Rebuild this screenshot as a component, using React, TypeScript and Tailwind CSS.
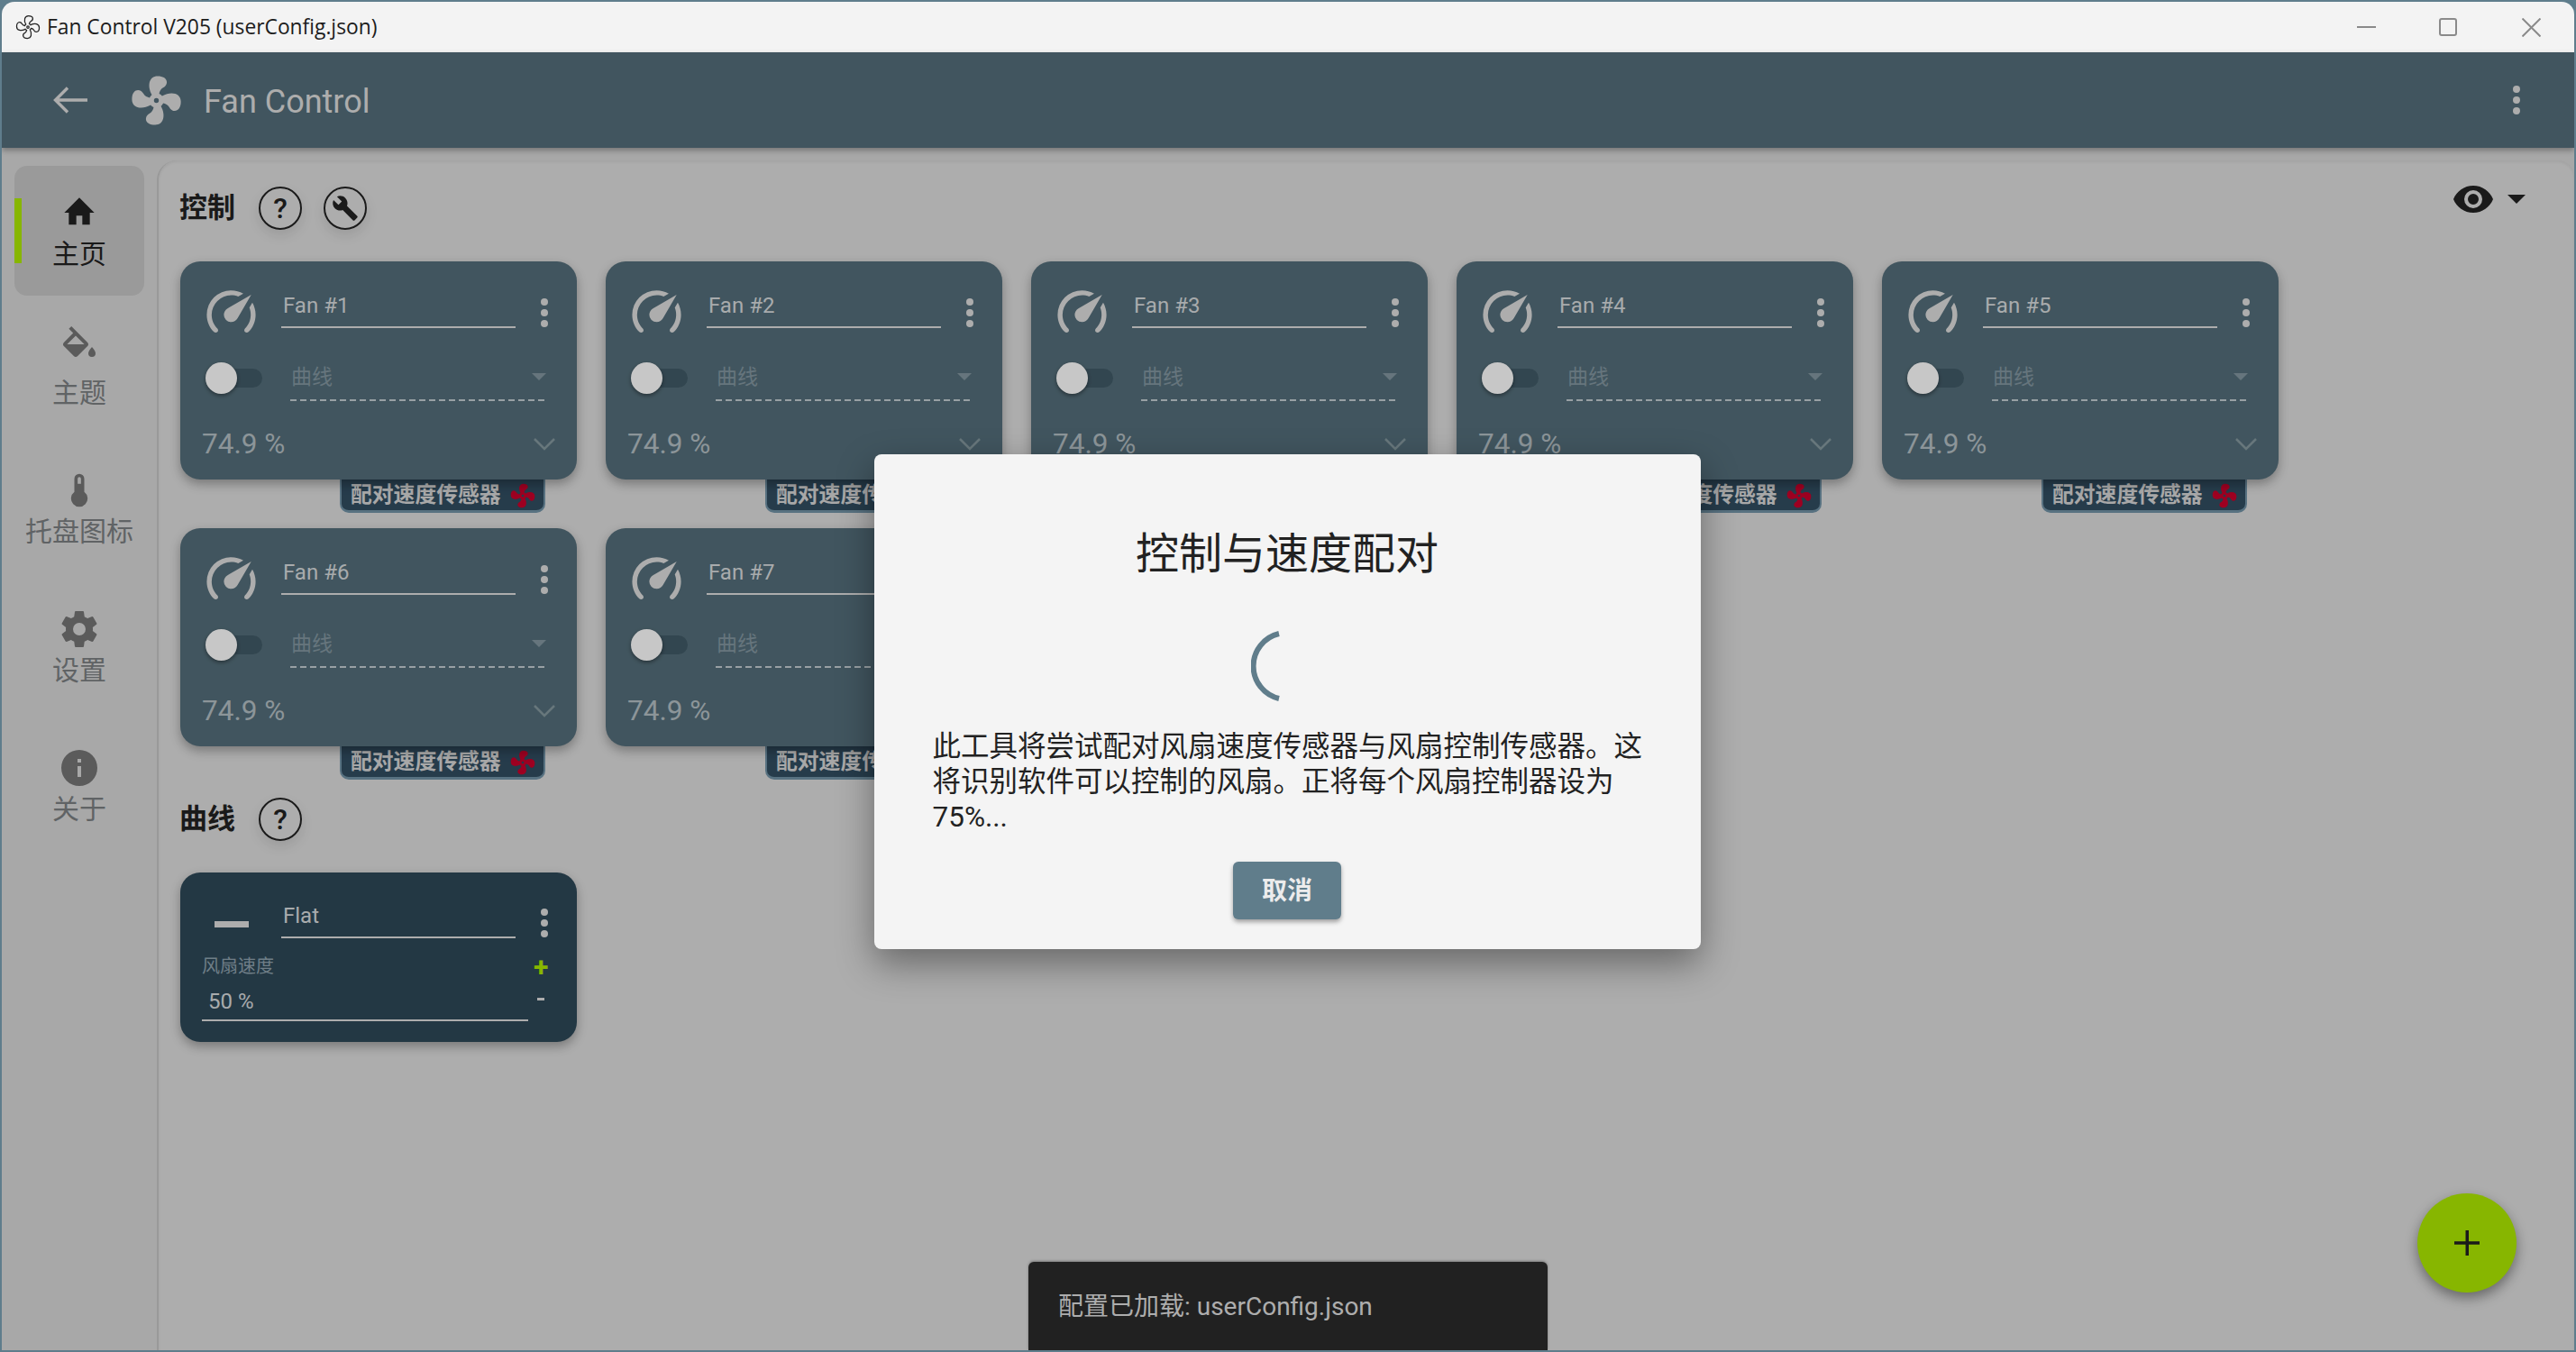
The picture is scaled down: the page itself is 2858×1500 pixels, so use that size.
import React from 'react';

const FAN = "M12,11A1,1 0 0,0 11,12A1,1 0 0,0 12,13A1,1 0 0,0 13,12A1,1 0 0,0 12,11M12.5,2C17,2 17.11,5.57 14.75,6.75C13.76,7.24 13.32,8.29 13.13,9.22C13.61,9.42 14.03,9.73 14.35,10.13C18.05,8.13 22.03,8.92 22.03,12.5C22.03,17 18.46,17.1 17.28,14.73C16.78,13.74 15.72,13.3 14.79,13.11C14.59,13.59 14.28,14 13.88,14.34C15.87,18.03 15.08,22 11.5,22C7,22 6.91,18.42 9.27,17.24C10.25,16.75 10.69,15.71 10.89,14.79C10.4,14.59 9.97,14.27 9.65,13.87C5.96,15.85 2,15.07 2,11.5C2,7 5.56,6.89 6.74,9.26C7.24,10.25 8.29,10.68 9.22,10.87C9.41,10.39 9.73,9.97 10.14,9.65C8.15,5.96 8.94,2 12.5,2Z";
const GAUGE = "M12,16A3,3 0 0,1 9,13C9,11.88 9.61,10.9 10.5,10.39L20.21,4.77L14.68,14.35C14.18,15.33 13.17,16 12,16M12,3C13.81,3 15.5,3.5 16.97,4.32L14.87,5.53C14,5.19 13,5 12,5A8,8 0 0,0 4,13C4,15.21 4.89,17.21 6.34,18.65H6.35C6.74,19.04 6.74,19.67 6.35,20.06C5.96,20.45 5.32,20.45 4.93,20.07V20.07C3.12,18.26 2,15.76 2,13A10,10 0 0,1 12,3M22,13C22,15.76 20.88,18.26 19.07,20.07V20.07C18.68,20.45 18.05,20.45 17.66,20.06C17.27,19.67 17.27,19.04 17.66,18.65V18.65C19.11,17.2 20,15.21 20,13C20,12 19.81,11 19.46,10.1L20.67,8C21.5,9.5 22,11.14 22,13Z";
const HOME = "M10,20V14H14V20H19V12H22L12,2L2,12H5V20H10Z";
const BUCKET = "M19,11.5C19,11.5 17,13.67 17,15A2,2 0 0,0 19,17A2,2 0 0,0 21,15C21,13.67 19,11.5 19,11.5M5.21,10L10,5.21L14.79,10M16.56,8.94L7.62,0L6.21,1.41L8.59,3.79L3.44,8.94C2.85,9.5 2.85,10.47 3.44,11.06L8.94,16.56C9.23,16.85 9.62,17 10,17C10.38,17 10.77,16.85 11.06,16.56L16.56,11.06C17.15,10.47 17.15,9.5 16.56,8.94Z";
const THERMO = "M15 13V5A3 3 0 0 0 9 5V13A5 5 0 1 0 15 13M12 4A1 1 0 0 1 13 5V8H11V5A1 1 0 0 1 12 4Z";
const COG = "M12,15.5A3.5,3.5 0 0,1 8.5,12A3.5,3.5 0 0,1 12,8.5A3.5,3.5 0 0,1 15.5,12A3.5,3.5 0 0,1 12,15.5M19.43,12.97C19.47,12.65 19.5,12.33 19.5,12C19.5,11.67 19.47,11.34 19.43,11L21.54,9.37C21.73,9.22 21.78,8.95 21.66,8.73L19.66,5.27C19.54,5.05 19.27,4.96 19.05,5.05L16.56,6.05C16.04,5.66 15.5,5.32 14.87,5.07L14.5,2.42C14.46,2.18 14.25,2 14,2H10C9.75,2 9.54,2.18 9.5,2.42L9.13,5.07C8.5,5.32 7.96,5.66 7.44,6.05L4.95,5.05C4.73,4.96 4.46,5.05 4.34,5.27L2.34,8.73C2.21,8.95 2.27,9.22 2.46,9.37L4.57,11C4.53,11.34 4.5,11.67 4.5,12C4.5,12.33 4.53,12.65 4.57,12.97L2.46,14.63C2.27,14.78 2.21,15.05 2.34,15.27L4.34,18.73C4.46,18.95 4.73,19.03 4.95,18.95L7.44,17.94C7.96,18.34 8.5,18.68 9.13,18.93L9.5,21.58C9.54,21.82 9.75,22 10,22H14C14.25,22 14.46,21.82 14.5,21.58L14.87,18.93C15.5,18.67 16.04,18.34 16.56,17.94L19.05,18.95C19.27,19.03 19.54,18.95 19.66,18.73L21.66,15.27C21.78,15.05 21.73,14.78 21.54,14.63L19.43,12.97Z";
const INFO = "M13,9H11V7H13M13,17H11V11H13M12,2A10,10 0 0,0 2,12A10,10 0 0,0 12,22A10,10 0 0,0 22,12A10,10 0 0,0 12,2Z";
const WRENCH = "M22.7,19L13.6,9.9C14.5,7.6 14,4.9 12.1,3C10.1,1 7.1,0.6 4.7,1.7L9,6L6,9L1.6,4.7C0.4,7.1 0.9,10.1 2.9,12.1C4.8,14 7.5,14.5 9.8,13.6L18.9,22.7C19.3,23.1 19.9,23.1 20.3,22.7L22.6,20.4C23.1,20 23.1,19.3 22.7,19Z";
const EYE = "M12,9A3,3 0 0,0 9,12A3,3 0 0,0 12,15A3,3 0 0,0 15,12A3,3 0 0,0 12,9M12,17A5,5 0 0,1 7,12A5,5 0 0,1 12,7A5,5 0 0,1 17,12A5,5 0 0,1 12,17M12,4.5C7,4.5 2.73,7.61 1,12C2.73,16.39 7,19.5 12,19.5C17,19.5 21.27,16.39 23,12C21.27,7.61 17,4.5 12,4.5Z";

const Mdi = ({ d, className }: { d: string; className: string }) => (
  <svg viewBox="0 0 24 24" fill="currentColor" className={className}>
    <path d={d} />
  </svg>
);

const Dots = ({ className = '' }: { className?: string }) => (
  <div className={`flex flex-col gap-[4px] ${className}`}>
    <div className="h-[8px] w-[8px] rounded-full bg-[#dedede]" />
    <div className="h-[8px] w-[8px] rounded-full bg-[#dedede]" />
    <div className="h-[8px] w-[8px] rounded-full bg-[#dedede]" />
  </div>
);

const NameField = ({ name }: { name: string }) => (
  <div className="ml-[23px] h-[50px] w-[260px] self-start border-b-2 border-[#dedede] pl-[2px] pt-[1px] text-[24px] leading-[48px] text-[#d8dcde]">
    {name}
  </div>
);

const NavItem = ({ icon, label, iconClass }: { icon: string; label: string; iconClass: string }) => (
  <div className="flex h-[154px] flex-col items-center pt-[39px] text-[#7b7f82]">
    <div className="flex h-[46px] items-center justify-center text-[#757575]">
      <Mdi d={icon} className={iconClass} />
    </div>
    <div className="mt-[5px] text-[30px] leading-[36px]">{label}</div>
  </div>
);

const HelpButton = ({ children }: { children: React.ReactNode }) => (
  <div className="flex h-[48px] w-[48px] items-center justify-center rounded-full border-[2.5px] border-[#222] text-[32px] font-medium text-[#222] shadow-[0_6px_14px_rgba(0,0,0,0.1)]">
    {children}
  </div>
);

const FanCard = ({ index }: { index: number }) => (
  <div>
    <div className="relative z-10 h-[242px] w-[440px] rounded-[22px] bg-[#546e7a] shadow-[0_5px_12px_rgba(0,0,0,0.3)]">
      <div className="flex items-center pl-[24px] pt-[24px] text-[#dedede]">
        <Mdi d={GAUGE} className="h-[65px] w-[65px]" />
        <NameField name={`Fan #${index}`} />
        <Dots className="ml-[28px]" />
      </div>
      <div className="mt-[15px] flex h-[51px] items-center pl-[28px]">
        <div className="relative h-[35px] w-[62px]">
          <div className="absolute left-[17px] top-[7px] h-[21px] w-[46px] rounded-full bg-[#415a67]" />
          <div className="absolute left-0 top-0 h-[35px] w-[35px] rounded-full bg-white shadow-[0_2px_4px_rgba(0,0,0,0.4)]" />
        </div>
        <div className="ml-[32px] w-[282px]">
          <div className="flex h-[49px] items-center justify-between pl-[1px] pt-[1px] text-[23px] text-[#8397a1]">
            <span>曲线</span>
            <div className="-mt-[3px] mr-[-2px] h-0 w-0 border-x-[8px] border-t-[8px] border-x-transparent border-t-[#8397a1]" />
          </div>
          <div className="h-[2px] bg-[repeating-linear-gradient(90deg,#c3ced3_0_7px,transparent_7px_11px)]" />
        </div>
      </div>
      <div className="mt-[24px] flex h-[48px] items-center justify-between px-[24px]">
        <span className="text-[31.5px] text-[#b4bfc4]">74.9 %</span>
        <svg viewBox="0 0 24 14" className="h-[14px] w-[24px] text-[#85999f]" fill="none" stroke="currentColor" strokeWidth="2.5">
          <path d="M1 1L12 12L23 1" />
        </svg>
      </div>
    </div>
    <div className="ml-[177px] flex h-[37px] w-[228px] items-center rounded-b-[10px] border-x-2 border-b-[3px] border-[#7192a6] bg-[#314d61] pl-[10px] pt-[2px] text-[23.8px] font-bold text-[#d8d8d8]">
      <span className="whitespace-nowrap leading-none">配对速度传感器</span>
      <Mdi d={FAN} className="ml-[8px] h-[32px] w-[32px] text-[#c9002b]" />
    </div>
  </div>
);

export default function App() {
  return (
    <div className="h-[1500px] w-[2858px] overflow-hidden bg-[#5f7d8c] p-[2px] font-['Roboto','Noto_Sans_CJK_SC',sans-serif]">
      <div className="relative flex h-full flex-col overflow-hidden rounded-t-[14px]">
        {/* title bar */}
        <div className="flex h-[56px] shrink-0 items-center bg-[#f3f3f3] pl-[14px]">
          <svg viewBox="0 0 24 24" className="h-[30px] w-[30px] text-[#222]" fill="none" stroke="currentColor" strokeWidth="1">
            <path d={FAN} />
          </svg>
          <span className="ml-[6px] font-['Open_Sans',sans-serif] text-[22.8px] text-[#1c1c1c]">Fan Control V205 (userConfig.json)</span>
          <div className="ml-auto flex items-center text-[#8a8a8a]">
            <div className="h-[2px] w-[21px] bg-[#8a8a8a]" />
            <div className="ml-[70px] h-[20px] w-[20px] rounded-[3px] border-2 border-[#8a8a8a]" />
            <svg viewBox="0 0 21 21" className="ml-[72px] mr-[37px] h-[21px] w-[21px]" stroke="currentColor" strokeWidth="2">
              <path d="M0.5 0.5L20.5 20.5M20.5 0.5L0.5 20.5" />
            </svg>
          </div>
        </div>

        <div className="relative flex min-h-0 flex-1 flex-col bg-[#d8d8d8]">
          {/* app bar */}
          <div className="relative z-20 flex h-[106px] shrink-0 items-center bg-[#546e7a] pl-[57px] text-[#dedede] shadow-[0_3px_6px_rgba(0,0,0,0.3)]">
            <svg viewBox="0 0 38 30" className="h-[30px] w-[38px]" fill="none" stroke="currentColor" strokeWidth="3.4">
              <path d="M16 1.5L2.5 15L16 28.5M3 15H38" />
            </svg>
            <Mdi d={FAN} className="ml-[44px] h-[65px] w-[65px]" />
            <span className="ml-[20px] pt-[3px] text-[36px] leading-none">Fan Control</span>
            <Dots className="ml-auto mr-[60px]" />
          </div>

          <div className="flex min-h-0 flex-1">
            {/* side nav */}
            <div className="w-[172px] shrink-0 pt-[20px]">
              <div className="relative ml-[14px] flex h-[144px] w-[144px] flex-col items-center rounded-[14px] bg-[#c6c6c6] pt-[32px] text-[#222]">
                <div className="absolute left-0 top-[36px] h-[72px] w-[8px] bg-[#aeea00]" />
                <Mdi d={HOME} className="h-[40px] w-[46px]" />
                <div className="mt-[8px] text-[30px] leading-[36px]">主页</div>
              </div>
              <NavItem icon={BUCKET} label="主题" iconClass="-mt-[8px] h-[48px] w-[48px]" />
              <NavItem icon={THERMO} label="托盘图标" iconClass="h-[44px] w-[44px]" />
              <NavItem icon={COG} label="设置" iconClass="h-[48px] w-[48px]" />
              <NavItem icon={INFO} label="关于" iconClass="h-[48px] w-[48px]" />
            </div>

            {/* main panel */}
            <div className="mt-[14px] flex-1 rounded-tl-[22px] rounded-tr-[18px] border-l-2 border-[#c4c4c4] bg-[#dedede] pl-[24px] pt-[29px] shadow-[inset_0_2px_3px_rgba(0,0,0,0.06)]">
              <div className="flex items-start justify-between pr-[54px]">
                <div className="-ml-[1px] flex items-center">
                  <span className="w-[88px] text-[31px] font-bold text-[#222]">控制</span>
                  <HelpButton>?</HelpButton>
                  <div className="ml-[24px]">
                    <HelpButton>
                      <Mdi d={WRENCH} className="h-[30px] w-[30px]" />
                    </HelpButton>
                  </div>
                </div>
                <div className="-mt-[6px] flex items-center text-[#222]">
                  <Mdi d={EYE} className="-mt-[4px] h-[48px] w-[48px]" />
                  <div className="-mt-[4px] ml-[14px] h-0 w-0 border-x-[10px] border-t-[10px] border-x-transparent border-t-[#222]" />
                </div>
              </div>

              <div className="mt-[35px] grid grid-cols-[repeat(5,440px)] gap-x-[32px] gap-y-[17px]">
                {[1, 2, 3, 4, 5, 6, 7].map((i) => (
                  <FanCard key={i} index={i} />
                ))}
              </div>

              <div className="-ml-[1px] mt-[20px] flex items-center">
                <span className="w-[88px] text-[31px] font-bold text-[#222]">曲线</span>
                <HelpButton>?</HelpButton>
              </div>

              <div className="mt-[35px] h-[188px] w-[440px] rounded-[22px] bg-[#2e4858] shadow-[0_5px_12px_rgba(0,0,0,0.3)]">
                <div className="flex items-center pl-[24px] pt-[23px] text-[#dedede]">
                  <div className="flex h-[65px] w-[65px] items-center justify-center">
                    <div className="mt-[3px] h-[7px] w-[38px] bg-[#dedede]" />
                  </div>
                  <NameField name="Flat" />
                  <Dots className="ml-[28px]" />
                </div>
                <div className="mt-[2px] flex pl-[24px]">
                  <div className="w-[362px]">
                    <div className="h-[28px] text-[20px] leading-[28px] text-[#8fa2ae]">风扇速度</div>
                    <div className="h-[47px] border-b-2 border-[#dedede] pl-[7px] pt-[9px] text-[24px] leading-[32px] text-[#d8dcde]">50 %</div>
                  </div>
                  <div className="ml-[6px] flex flex-col items-center pt-[1px]">
                    <span className="text-[30px] font-bold leading-[28px] text-[#aeea00]">+</span>
                    <div className="mt-[20px] h-[3px] w-[8px] bg-[#dedede]" />
                  </div>
                </div>
              </div>
            </div>
          </div>

          {/* snackbar */}
          <div className="absolute bottom-0 left-[1139px] z-20 flex h-[98px] w-[576px] items-center rounded-t-[6px] bg-[#2b2b2b] pl-[33px] pt-[2px] text-[28px] text-[#dedede] shadow-[0_-1px_3px_rgba(0,0,0,0.3)]">
            配置已加载: userConfig.json
          </div>

          {/* fab */}
          <div className="absolute bottom-[64px] right-[64px] z-20 flex h-[110px] w-[110px] items-center justify-center rounded-full bg-[#aeea00] text-[#222] shadow-[0_6px_14px_rgba(0,0,0,0.4)]">
            <svg viewBox="0 0 28 28" className="h-[28px] w-[28px]" fill="currentColor">
              <path d="M12.5 0h3.5v12.2H28v3.6H16V28h-3.5V15.8H0v-3.6h12.5z" />
            </svg>
          </div>

          {/* scrim + dialog */}
          <div className="absolute inset-0 z-30 flex items-center justify-center bg-black/22">
            <div className="mr-[2px] w-[917px] rounded-[8px] bg-[#f4f4f4] px-[65px] pb-[33px] pt-[81px] shadow-[0_16px_40px_rgba(0,0,0,0.4)]">
              <div className="text-center text-[48px] leading-[60px] text-[#222]">控制与速度配对</div>
              <svg viewBox="0 0 80 80" className="mx-auto mt-[54px] h-[80px] w-[80px]" fill="none" stroke="#607d8b" strokeWidth="6">
                <path d="M31 4A37 37 0 0 0 31 76" />
              </svg>
              <div className="mt-[30px] -mb-[1px] whitespace-nowrap text-[31.5px] leading-[39px] text-[#222]">
                此工具将尝试配对风扇速度传感器与风扇控制传感器。这
                <br />
                将识别软件可以控制的风扇。正将每个风扇控制器设为
                <br />
                75%...
              </div>
              <div className="mx-auto mt-[31px] flex h-[64px] w-[120px] items-center justify-center rounded-[6px] bg-[#607d8b] pt-[2px] text-[28px] font-bold text-[#ececec] shadow-[0_3px_5px_rgba(0,0,0,0.35)]">
                取消
              </div>
            </div>
          </div>
        </div>
      </div>
    </div>
  );
}
